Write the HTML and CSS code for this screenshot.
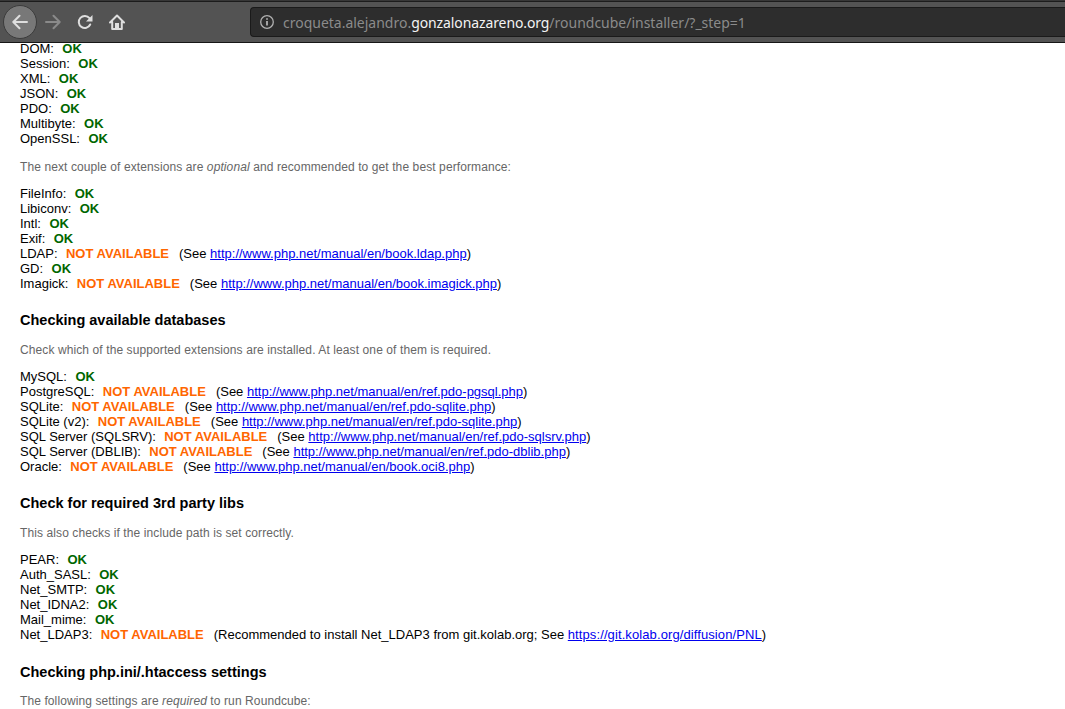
FILE: index.html
```html
<!DOCTYPE html>
<html lang="en">
<head>
<meta charset="utf-8">
<title>Roundcube Webmail Installer</title>
<link rel="stylesheet" href="styles.css">
</head>
<body>
<header class="toolbar">
  <nav class="nav">
    <span class="back"><svg width="16" height="16" viewBox="0 0 16 16"><path d="M15 8H1.5M7.5 1.7L1.3 8l6.2 6.3" /></svg></span>
    <svg class="forward" width="16" height="16" viewBox="0 0 16 16"><path d="M1 8h13.5M8.5 1.7L14.7 8l-6.2 6.3" /></svg>
    <svg class="reload" width="16" height="16" viewBox="0 0 16 16"><path d="M13.200 10.500A6 6 0 1 1 12.500 4.200" /><path class="solid" d="M15.500 1v6.500H9z" /></svg>
    <svg class="home" width="16" height="16" viewBox="0 0 16 16"><path d="M1 8.500l7-7 7 7M3.200 8V15h9.600V8" /><path class="solid" d="M6 14V9h4v5z" /></svg>
  </nav>
  <div class="urlbar">
    <svg class="info" width="14" height="14" viewBox="0 0 14 14"><circle cx="7" cy="7" r="6.300" /><path d="M7 6v4.500M7 3.300v1.500" /></svg>
    <span class="url">croqueta.alejandro.<span class="domain">gonzalonazareno.org</span>/roundcube/installer/?_step=1</span>
  </div>
</header>
<main class="content">
  <div class="checks">
    <div>DOM:&nbsp; <span class="ok">OK</span></div>
    <div>Session:&nbsp; <span class="ok">OK</span></div>
    <div>XML:&nbsp; <span class="ok">OK</span></div>
    <div>JSON:&nbsp; <span class="ok">OK</span></div>
    <div>PDO:&nbsp; <span class="ok">OK</span></div>
    <div>Multibyte:&nbsp; <span class="ok">OK</span></div>
    <div>OpenSSL:&nbsp; <span class="ok">OK</span></div>
  </div>
  <p class="hint">The next couple of extensions are <em>optional</em> and recommended to get the best performance:</p>
  <div class="checks">
    <div>FileInfo:&nbsp; <span class="ok">OK</span></div>
    <div>Libiconv:&nbsp; <span class="ok">OK</span></div>
    <div>Intl:&nbsp; <span class="ok">OK</span></div>
    <div>Exif:&nbsp; <span class="ok">OK</span></div>
    <div>LDAP:&nbsp; <span class="na">NOT AVAILABLE</span><span class="note">(See <a href="#">http://www.php.net/manual/en/book.ldap.php</a>)</span></div>
    <div>GD:&nbsp; <span class="ok">OK</span></div>
    <div>Imagick:&nbsp; <span class="na">NOT AVAILABLE</span><span class="note">(See <a href="#">http://www.php.net/manual/en/book.imagick.php</a>)</span></div>
  </div>
  <h3>Checking available databases</h3>
  <p class="hint">Check which of the supported extensions are installed. At least one of them is required.</p>
  <div class="checks">
    <div>MySQL:&nbsp; <span class="ok">OK</span></div>
    <div>PostgreSQL:&nbsp; <span class="na">NOT AVAILABLE</span><span class="note">(See <a href="#">http://www.php.net/manual/en/ref.pdo-pgsql.php</a>)</span></div>
    <div>SQLite:&nbsp; <span class="na">NOT AVAILABLE</span><span class="note">(See <a href="#">http://www.php.net/manual/en/ref.pdo-sqlite.php</a>)</span></div>
    <div>SQLite (v2):&nbsp; <span class="na">NOT AVAILABLE</span><span class="note">(See <a href="#">http://www.php.net/manual/en/ref.pdo-sqlite.php</a>)</span></div>
    <div>SQL Server (SQLSRV):&nbsp; <span class="na">NOT AVAILABLE</span><span class="note">(See <a href="#">http://www.php.net/manual/en/ref.pdo-sqlsrv.php</a>)</span></div>
    <div>SQL Server (DBLIB):&nbsp; <span class="na">NOT AVAILABLE</span><span class="note">(See <a href="#">http://www.php.net/manual/en/ref.pdo-dblib.php</a>)</span></div>
    <div>Oracle:&nbsp; <span class="na">NOT AVAILABLE</span><span class="note">(See <a href="#">http://www.php.net/manual/en/book.oci8.php</a>)</span></div>
  </div>
  <h3>Check for required 3rd party libs</h3>
  <p class="hint">This also checks if the include path is set correctly.</p>
  <div class="checks">
    <div>PEAR:&nbsp; <span class="ok">OK</span></div>
    <div>Auth_SASL:&nbsp; <span class="ok">OK</span></div>
    <div>Net_SMTP:&nbsp; <span class="ok">OK</span></div>
    <div>Net_IDNA2:&nbsp; <span class="ok">OK</span></div>
    <div>Mail_mime:&nbsp; <span class="ok">OK</span></div>
    <div>Net_LDAP3:&nbsp; <span class="na">NOT AVAILABLE</span><span class="note">(Recommended to install Net_LDAP3 from git.kolab.org; See <a class="repo" href="#">https://git.kolab.org/diffusion/PNL</a>)</span></div>
  </div>
  <h3 class="settings">Checking php.ini/.htaccess settings</h3>
  <p class="hint">The following settings are <em>required</em> to run Roundcube:</p>
</main>
</body>
</html>
```
FILE: styles.css
```css
* { box-sizing: border-box; }
html, body { height: 100%; }
body {
  margin: 0;
  display: flex;
  flex-direction: column;
  overflow: hidden;
  background: #fff;
  color: #000;
  font: 13px/15px "Liberation Sans", Arial, sans-serif;
}
.toolbar {
  flex: none;
  display: flex;
  height: 43px;
  padding-top: 5px;
  background: linear-gradient(#373737 1px, #1c1c1c 1px, #1c1c1c 2px, #535353 2px);
  border-bottom: 1px solid #161616;
}
.nav { width: 250px; height: 34px; padding-left: 3px; display: flex; align-items: center; }
.nav svg { fill: none; stroke: #dedede; stroke-width: 2; stroke-linecap: round; stroke-linejoin: round; }
.back {
  display: flex;
  align-items: center;
  justify-content: center;
  width: 34px;
  height: 34px;
  border: 1px solid #3b3b3b;
  border-radius: 50%;
  background: #787878;
}
.nav .forward { margin-left: 8px; stroke: #8a8a8a; }
.nav .reload { margin-left: 16px; }
.nav .home { margin-left: 16px; }
.nav .solid { fill: #dedede; stroke: none; }
.urlbar {
  flex: 1;
  display: flex;
  align-items: center;
  height: 30px;
  margin-top: 2px;
  padding-left: 9px;
  border: 1px solid #1a1a1a;
  border-right: 0;
  border-radius: 4px 0 0 4px;
  background: #2d2d2d;
  color: #8b8b8b;
  font: 15px/20px "Noto Sans", sans-serif;
  white-space: nowrap;
}
.info { margin-right: 9px; fill: none; stroke: #b0b0b0; stroke-width: 1.3; }
.info path { stroke-width: 1.8; }
.url { transform: scaleX(.932); transform-origin: 0 50%; }
.domain { color: #f4f4f4; letter-spacing: -.1px; }
.content { flex: 1; min-height: 0; margin-top: -2px; padding: 0 20px; }
.checks { white-space: nowrap; }
.ok, .na { margin-left: 1.2px; font-weight: bold; }
.ok { color: #060; }
.na { color: #f60; }
.note { margin-left: 10px; }
a { color: #00e; text-decoration: underline; }
.repo { letter-spacing: .1px; }
.hint { margin: 14px 0 12px; color: #666; font-size: 12px; line-height: 14px; letter-spacing: .1px; }
h3 { margin: 21px 0 15px; font-size: 14.5px; line-height: 16px; }
h3 + .hint { margin-top: 15px; }
.settings { margin: 22px 0 14px; }
.settings + .hint { margin-top: 14px; }
```
